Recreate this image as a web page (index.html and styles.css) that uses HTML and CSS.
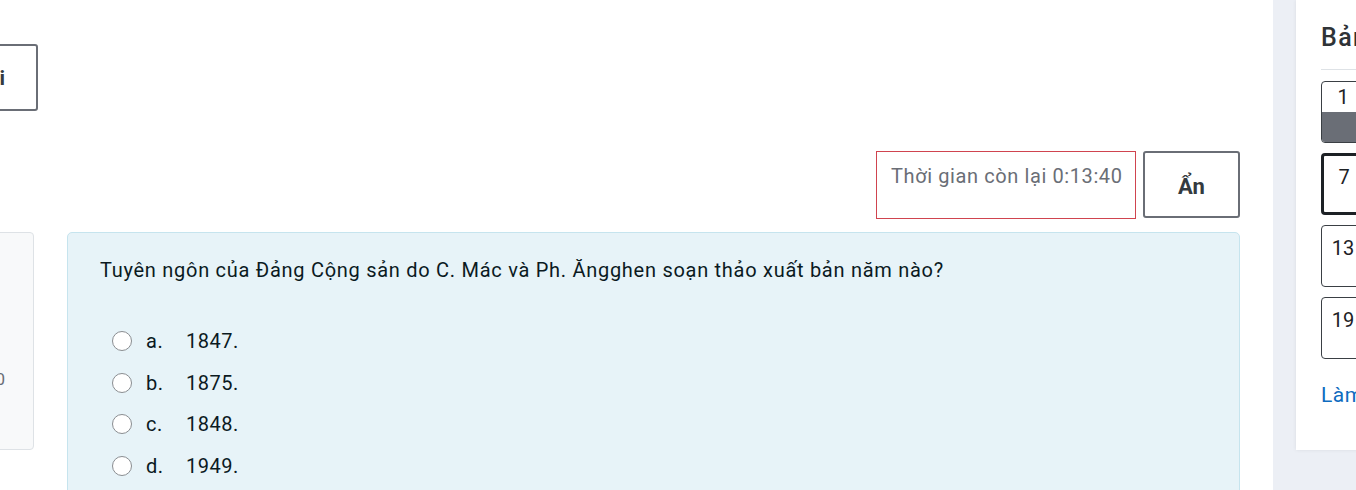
FILE: index.html
```html
<!DOCTYPE html>
<html lang="vi">
<head>
<meta charset="utf-8">
<link rel="stylesheet" href="styles.css">
</head>
<body>
<div class="page">
  <main class="main">
    <div class="top-row">
      <button class="btn-outline btn-submit">Nộp bài</button>
    </div>
    <div class="timer-row">
      <div class="timer">Thời gian còn lại 0:13:40</div>
      <button class="btn-outline btn-hide">Ẩn</button>
    </div>
    <div class="content-row">
      <div class="info-card"><span class="info-text">Chưa trả lời Đạt điểm 1,00 trên 1,00 Đánh dấu câu hỏi 0</span></div>
      <div class="question-card">
        <p class="qtext">Tuyên ngôn của Đảng Cộng sản do C. Mác và Ph. Ăngghen soạn thảo xuất bản năm nào?</p>
        <div class="answers">
          <label class="answer"><span class="radio"></span><span class="letter">a.</span><span class="val">1847.</span></label>
          <label class="answer"><span class="radio"></span><span class="letter">b.</span><span class="val">1875.</span></label>
          <label class="answer"><span class="radio"></span><span class="letter">c.</span><span class="val">1848.</span></label>
          <label class="answer"><span class="radio"></span><span class="letter">d.</span><span class="val">1949.</span></label>
        </div>
      </div>
    </div>
  </main>
  <aside class="drawer-area">
    <div class="drawer">
      <h3 class="drawer-title">Bảng điều hướng bài kiểm tra</h3>
      <div class="nav-grid">
        <div class="qbtn answered"><span class="qnum">1</span><span class="qfill"></span></div>
        <div class="qbtn current"><span class="qnum">7</span></div>
        <div class="qbtn"><span class="qnum">13</span></div>
        <div class="qbtn"><span class="qnum">19</span></div>
      </div>
      <a class="finish-link" href="#">Làm xong bài</a>
    </div>
  </aside>
</div>
</body>
</html>
```
FILE: styles.css
```css
* { box-sizing: border-box; }
html, body { margin: 0; padding: 0; }
body {
  font-family: Roboto, "Noto Sans", "Liberation Sans", sans-serif;
  background: #fff;
  color: #1d2125;
  width: 1356px;
  height: 490px;
  overflow: hidden;
}
.page {
  display: flex;
  height: 490px;
}
.main {
  width: 1273px;
  flex: none;
  background: #fff;
  overflow: hidden;
}
.top-row {
  display: flex;
  padding-top: 44px;
  height: 151px;
}
.btn-outline {
  font-family: inherit;
  background: #fff;
  border: 2px solid #6a6e76;
  border-radius: 3px;
  color: #343a40;
  font-weight: 700;
  font-size: 21px;
  white-space: nowrap;
}
.btn-submit {
  margin-left: -112px;
  width: 150px;
  height: 67px;
  text-align: right;
  padding: 0 31px 0 0;
  flex: none;
}
.timer-row {
  display: flex;
  justify-content: flex-end;
  gap: 7px;
  padding-right: 33px;
  height: 81px;
}
.timer {
  width: 260px;
  height: 68px;
  border: 1px solid #d0444f;
  color: #6a6e76;
  font-size: 20px;
  letter-spacing: 0.6px;
  padding: 12px 0 0 14px;
  line-height: 24px;
  white-space: nowrap;
}
.btn-hide {
  width: 97px;
  height: 67px;
  padding: 4px 0 0;
  font-size: 22px;
}
.content-row {
  display: flex;
  gap: 33px;
  padding-right: 33px;
}
.info-card {
  width: 200px;
  margin-left: -166px;
  height: 218px;
  background: #f8f9fa;
  border: 1px solid #dee2e6;
  border-radius: 4px;
  color: #6a6e76;
  font-size: 17px;
  overflow: hidden;
  padding: 136px 0 0 0;
  white-space: nowrap;
}
.info-text {
  display: block;
  width: 170px;
  text-align: right;
  direction: rtl;
  overflow: hidden;
}
.question-card {
  flex: 1;
  background: #e7f3f8;
  border: 1px solid #c6e4ee;
  border-radius: 5px;
  height: 270px;
  padding: 22px 32px 0;
}
.qtext {
  margin: 0;
  font-size: 20px;
  letter-spacing: 0.72px;
  line-height: 30px;
  color: #0b1a1f;
}
.answers {
  display: flex;
  flex-direction: column;
  margin-top: 41px;
  gap: 11.5px;
}
.answer {
  display: flex;
  align-items: center;
  height: 30px;
  font-size: 20px;
  letter-spacing: 0.5px;
  color: #0b1a1f;
  padding-left: 12px;
}
.radio {
  width: 20px;
  height: 20px;
  border: 1.5px solid #8a8d91;
  border-radius: 50%;
  background: #fff;
  flex: none;
}
.letter {
  margin-left: 14px;
  width: 40px;
}
.drawer-area {
  flex: 1;
  background: #eceff5;
  padding-left: 23px;
}
.drawer {
  background: #fff;
  height: 450px;
  padding: 20px 0 0 25px;
  box-shadow: 0 0 4px rgba(0,0,0,0.08);
  overflow: hidden;
  white-space: nowrap;
}
.drawer-title {
  margin: 0;
  font-size: 25px;
  letter-spacing: 1.4px;
  font-weight: 500;
  color: #2f3337;
  line-height: 36px;
  padding-bottom: 13px;
  border-bottom: 1px solid #dee2e6;
}
.nav-grid {
  display: flex;
  flex-direction: column;
  gap: 10px;
  margin-top: 11px;
}
.qbtn {
  width: 44px;
  height: 62px;
  border: 1px solid #3a3f44;
  border-radius: 4px;
  display: flex;
  flex-direction: column;
  overflow: hidden;
  background: #fff;
  flex: none;
}
.qbtn .qnum {
  display: block;
  font-size: 20px;
  line-height: 30px;
  padding-top: 7px;
  text-align: center;
  color: #1d2125;
}
.qbtn.answered .qnum {
  padding-top: 0;
}
.qbtn.answered .qfill {
  flex: 1;
  background: #6a6e76;
}
.qbtn.current {
  border: 3px solid #1d2125;
}
.qbtn.current .qnum {
  padding: 6px 0 0 2px;
}
.finish-link {
  display: block;
  margin-top: 24px;
  color: #0f6cbf;
  text-decoration: none;
  font-size: 21px;
  letter-spacing: 0.5px;
}
```
